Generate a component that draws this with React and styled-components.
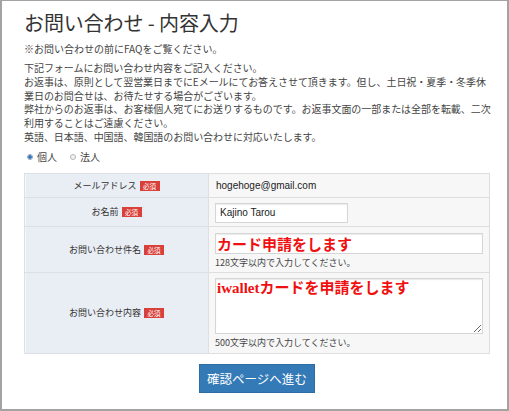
import React from 'react'
import styled, { createGlobalStyle } from 'styled-components'

const GlobalStyle = createGlobalStyle`
  body {
    margin: 0;
    background: #ffffff;
    font-family: "Noto Sans CJK JP", "Liberation Sans", sans-serif;
    color: #333333;
  }
`

const fields = [
  { label: 'メールアドレス', h: 24, kind: 'text', value: 'hogehoge@gmail.com' },
  { label: 'お名前', h: 29, kind: 'input', value: 'Kajino Tarou' },
  { label: 'お問い合わせ件名', h: 45, kind: 'subject', value: 'カード申請をします', help: '128文字以内で入力してください。' },
  { label: 'お問い合わせ内容', h: 81, kind: 'body', value: 'iwalletカードを申請をします', help: '500文字以内で入力してください。' },
]

const App = () => {
  return (
    <Frame>
      <GlobalStyle />
      <Content>
        <Title>お問い合わせ - 内容入力</Title>
        <Note>※お問い合わせの前にFAQをご覧ください。</Note>
        <Intro>
          下記フォームにお問い合わせ内容をご記入ください。<br />
          お返事は、原則として翌営業日までにEメールにてお答えさせて頂きます。但し、土日祝・夏季・冬季休<br />
          業日のお問合せは、お待たせする場合がございます。<br />
          弊社からのお返事は、お客様個人宛てにお送りするものです。お返事文面の一部または全部を転載、二次<br />
          利用することはご遠慮ください。<br />
          英語、日本語、中国語、韓国語のお問い合わせに対応いたします。
        </Intro>
        <RadioRow>
          <RadioLabel>
            <Radio type="radio" name="type" defaultChecked />個人
          </RadioLabel>
          <RadioLabel>
            <Radio type="radio" name="type" />法人
          </RadioLabel>
        </RadioRow>
        <FormTable>
          <tbody>
            {fields.map((f) => (
              <Row key={f.label} $h={f.h}>
                <LabelCell>
                  {f.label}<Badge>必須</Badge>
                </LabelCell>
                <ValueCell>
                  {f.kind === 'text' && <Plain>{f.value}</Plain>}
                  {f.kind === 'input' && <NameInput defaultValue={f.value} />}
                  {f.kind === 'subject' && <RedInput defaultValue={f.value} />}
                  {f.kind === 'body' && <RedArea defaultValue={f.value} />}
                  {f.help && <Help>{f.help}</Help>}
                </ValueCell>
              </Row>
            ))}
          </tbody>
        </FormTable>
        <Actions>
          <Submit>確認ページへ進む</Submit>
        </Actions>
      </Content>
    </Frame>
  )
}

const Frame = styled.div`
  width: 509px;
  height: 411px;
  box-sizing: border-box;
  border: 2px solid #a3a3a3;
  border-top-width: 1px;
  overflow: hidden;
`

const Content = styled.div`
  width: 466px;
  margin-left: 22px;
`

const Title = styled.h1`
  margin: 0;
  padding-top: 9px;
  font-size: 20px;
  font-weight: 400;
  line-height: 26px;
  color: #333;
  letter-spacing: -0.1px;
`

const Note = styled.p`
  margin: 6px 0 0;
  font-size: 10px;
  line-height: 14px;
  color: #444;
`

const Intro = styled.p`
  margin: 5px 0 0;
  font-size: 10px;
  line-height: 13.8px;
  color: #444;
  white-space: nowrap;
  letter-spacing: -0.05px;
`

const RadioRow = styled.div`
  display: flex;
  gap: 10px;
  margin-top: 6px;
  height: 14px;
  align-items: center;
`

const RadioLabel = styled.label`
  display: flex;
  align-items: center;
  gap: 4px;
  font-size: 10px;
  color: #444;
`

const Radio = styled.input`
  appearance: none;
  margin: 0 0 0 3px;
  width: 6px;
  height: 6px;
  border-radius: 50%;
  border: 1px solid #b5b5b5;
  background: #f3f3f3;
  box-sizing: border-box;
  &:checked {
    background: radial-gradient(circle, #2f6fb3 0 1.5px, #e8eef6 2px);
    border-color: #8aa3c2;
  }
`

const FormTable = styled.table`
  width: 466px;
  margin-top: 9px;
  border-collapse: collapse;
  border: 1px solid #e2e2e2;
  font-size: 10px;
`

const Row = styled.tr`
  height: ${(p) => p.$h}px;
`

const LabelCell = styled.td`
  width: 186px;
  box-sizing: border-box;
  background: #e9edf4;
  border: 1px solid #dcdfe4;
  box-shadow: inset 1px 0 0 #f4f6f9;
  text-align: center;
  vertical-align: middle;
  color: #333;
  font-size: 9px;
  padding: 0;
`

const Badge = styled.span`
  display: inline-block;
  margin-left: 3px;
  padding: 0 3.5px;
  height: 10px;
  line-height: 10px;
  background: #d9403a;
  color: #fff;
  font-size: 6.5px;
  vertical-align: 0;
`

const ValueCell = styled.td`
  background: #f7f7f7;
  border: 1px solid #dedede;
  padding: 5px 6px 3px 6px;
  vertical-align: top;
  line-height: 13px;
`

const Plain = styled.div`
  padding: 0 0 0 1px;
  font-family: "Liberation Sans", "Noto Sans CJK JP", sans-serif;
  font-size: 10px;
  color: #222;
  line-height: 13px;
`

const fieldBox = `
  display: block;
  box-sizing: border-box;
  margin: 0;
  background: #fff;
  border: 1px solid #d6d6d6;
  box-shadow: inset 0 1px 1px rgba(0, 0, 0, 0.08);
  outline: none;
`

const NameInput = styled.input`
  ${fieldBox}
  width: 133px;
  height: 20px;
  padding: 0 4px;
  font-family: "Liberation Sans", sans-serif;
  font-size: 10px;
  color: #222;
`

const redText = `
  font-family: "Liberation Serif", "Noto Sans CJK JP", serif;
  font-weight: 700;
  font-size: 15px;
  color: #f01010;
`

const RedInput = styled.input`
  ${fieldBox}
  ${redText}
  width: 268px;
  height: 21px;
  padding: 0 1px;
  margin-top: 1px;
`

const RedArea = styled.textarea`
  ${fieldBox}
  ${redText}
  width: 268px;
  height: 56px;
  padding: 0 1px;
  line-height: 18px;
  resize: vertical;
`

const Help = styled.div`
  margin-top: 2px;
  font-size: 9px;
  line-height: 13px;
  color: #444;
`

const Actions = styled.div`
  display: flex;
  justify-content: center;
  margin-top: 10px;
`

const Submit = styled.button`
  width: 116px;
  height: 29px;
  border: 1px solid #2e6da4;
  background: #337ab7;
  color: #fff;
  font-family: "Noto Sans CJK JP", sans-serif;
  font-size: 12.5px;
  padding: 0;
  cursor: pointer;
`

export default App
